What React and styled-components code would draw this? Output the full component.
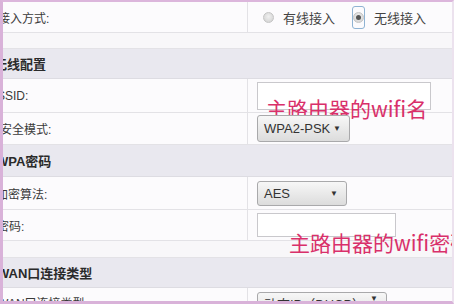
import React from "react";
import styled, { createGlobalStyle } from "styled-components";

const GlobalStyle = createGlobalStyle`
  html, body {
    margin: 0;
    padding: 0;
    background: #ffffff;
  }
  * {
    box-sizing: border-box;
  }
`;

const Frame = styled.div`
  width: 454px;
  height: 304px;
  border-top: 2px solid #dcb6dc;
  border-left: 3px solid #d9b2d9;
  border-bottom: 3px solid #d9b2d9;
  border-right: 2px solid #ece2ee;
  background: #fcfbfd;
  overflow: hidden;
  font-family: "Liberation Sans", "Noto Sans CJK SC", sans-serif;
  color: #333;
`;

const Row = styled.div`
  display: grid;
  grid-template-columns: 245px 1fr;
  height: ${(p) => p.$h}px;
  border-bottom: 1px solid #e3e2e6;
  background: #fcfbfd;
`;

const Spacer = styled.div`
  height: ${(p) => p.$h}px;
  border-bottom: 1px solid #e3e2e6;
  background: #f8f7f9;
`;

const Header = styled.div`
  display: flex;
  align-items: center;
  height: ${(p) => p.$h}px;
  border-bottom: 1px solid #dddce2;
  background: #e9e8ef;
  font-size: 13px;
  font-weight: bold;
  color: #2a2a2a;
  white-space: nowrap;
  span {
    margin-left: ${(p) => p.$indent || -5}px;
  }
`;

const LabelCell = styled.div`
  display: flex;
  align-items: ${(p) => (p.$top ? "flex-start" : "center")};
  padding-top: ${(p) => p.$pt || 0}px;
  border-right: 1px solid #e3e2e6;
  font-size: 12px;
  color: #3a3a3a;
  white-space: nowrap;
  overflow: hidden;
  span {
    margin-left: ${(p) => p.$indent || -3}px;
  }
`;

const ValueCell = styled.div`
  position: relative;
  display: flex;
  align-items: ${(p) => (p.$top ? "flex-start" : "center")};
  padding-left: 9px;
  padding-top: ${(p) => p.$pt || 0}px;
  gap: 10px;
`;

const RadioGroup = styled.label`
  display: flex;
  align-items: center;
  gap: 9px;
  font-size: 13px;
  color: #444;
  margin-left: ${(p) => p.$ml || 0}px;
`;

const RadioCircle = styled.span`
  width: 11px;
  height: 11px;
  border-radius: 50%;
  border: 1px solid #c4c4c4;
  background: radial-gradient(circle at 50% 40%, #f0f0f0, #cfcfcf);
  display: flex;
  align-items: center;
  justify-content: center;
`;

const FocusRing = styled.span`
  display: flex;
  align-items: center;
  justify-content: center;
  width: 13px;
  height: 23px;
  border: 1px solid #8fb3d3;
  border-radius: 3px;
`;

const Dot = styled.span`
  width: 5px;
  height: 5px;
  border-radius: 50%;
  background: #555;
`;

const TextInput = styled.div`
  width: ${(p) => p.$w}px;
  height: ${(p) => p.$h}px;
  border: 1px solid #c9c8cc;
  background: #ffffff;
`;

const Select = styled.div`
  display: flex;
  align-items: ${(p) => (p.$top ? "flex-start" : "center")};
  justify-content: space-between;
  width: ${(p) => p.$w}px;
  height: ${(p) => p.$h}px;
  padding: ${(p) => (p.$top ? "1px" : "0")} 8px 0 6px;
  border: 1px solid #a9a9ab;
  border-radius: 3px;
  background: linear-gradient(#f7f7f7, #dcdcdc);
  font-size: 13px;
  color: #333;
  white-space: nowrap;
`;

const Arrow = styled.span`
  font-size: 8px;
  color: #333;
`;

const Note = styled.div`
  position: absolute;
  left: ${(p) => p.$x}px;
  top: ${(p) => p.$y}px;
  font-family: "Noto Sans CJK SC", "Liberation Sans", sans-serif;
  font-size: 21px;
  line-height: 22px;
  color: #d9306a;
  white-space: nowrap;
`;

export default function App() {
  return (
    <>
      <GlobalStyle />
      <Frame>
        <Row $h={31}>
          <LabelCell $indent={-5}>
            <span>接入方式:</span>
          </LabelCell>
          <ValueCell>
            <RadioGroup $ml={6}>
              <RadioCircle />
              有线接入
            </RadioGroup>
            <RadioGroup $ml={7}>
              <FocusRing>
                <RadioCircle>
                  <Dot />
                </RadioCircle>
              </FocusRing>
              无线接入
            </RadioGroup>
          </ValueCell>
        </Row>
        <Spacer $h={16} />
        <Header $h={30} $indent={-9}>
          <span>无线配置</span>
        </Header>
        <Row $h={34}>
          <LabelCell $indent={-6}>
            <span>SSID:</span>
          </LabelCell>
          <ValueCell>
            <TextInput $w={174} $h={28} />
            <Note $x={18} $y={18}>主路由器的wifi名</Note>
          </ValueCell>
        </Row>
        <Row $h={32}>
          <LabelCell $indent={-3}>
            <span>安全模式:</span>
          </LabelCell>
          <ValueCell>
            <Select $w={93} $h={27}>
              WPA2-PSK <Arrow>▼</Arrow>
            </Select>
          </ValueCell>
        </Row>
        <Header $h={32} $indent={-7}>
          <span>WPA密码</span>
        </Header>
        <Row $h={33}>
          <LabelCell $indent={-7}>
            <span>加密算法:</span>
          </LabelCell>
          <ValueCell>
            <Select $w={90} $h={25}>
              AES <Arrow>▼</Arrow>
            </Select>
          </ValueCell>
        </Row>
        <Row $h={31}>
          <LabelCell $indent={-6}>
            <span>密码:</span>
          </LabelCell>
          <ValueCell>
            <TextInput $w={139} $h={24} />
            <Note $x={41} $y={21}>主路由器的wifi密码</Note>
          </ValueCell>
        </Row>
        <Spacer $h={17} />
        <Header $h={30} $indent={-6}>
          <span>WAN口连接类型</span>
        </Header>
        <Row $h={30}>
          <LabelCell $top $pt={6} $indent={-6}>
            <span>WAN口连接类型:</span>
          </LabelCell>
          <ValueCell $top $pt={4}>
            <Select $top $w={130} $h={26}>
              动态IP（DHCP） <Arrow>▼</Arrow>
            </Select>
          </ValueCell>
        </Row>
      </Frame>
    </>
  );
}
